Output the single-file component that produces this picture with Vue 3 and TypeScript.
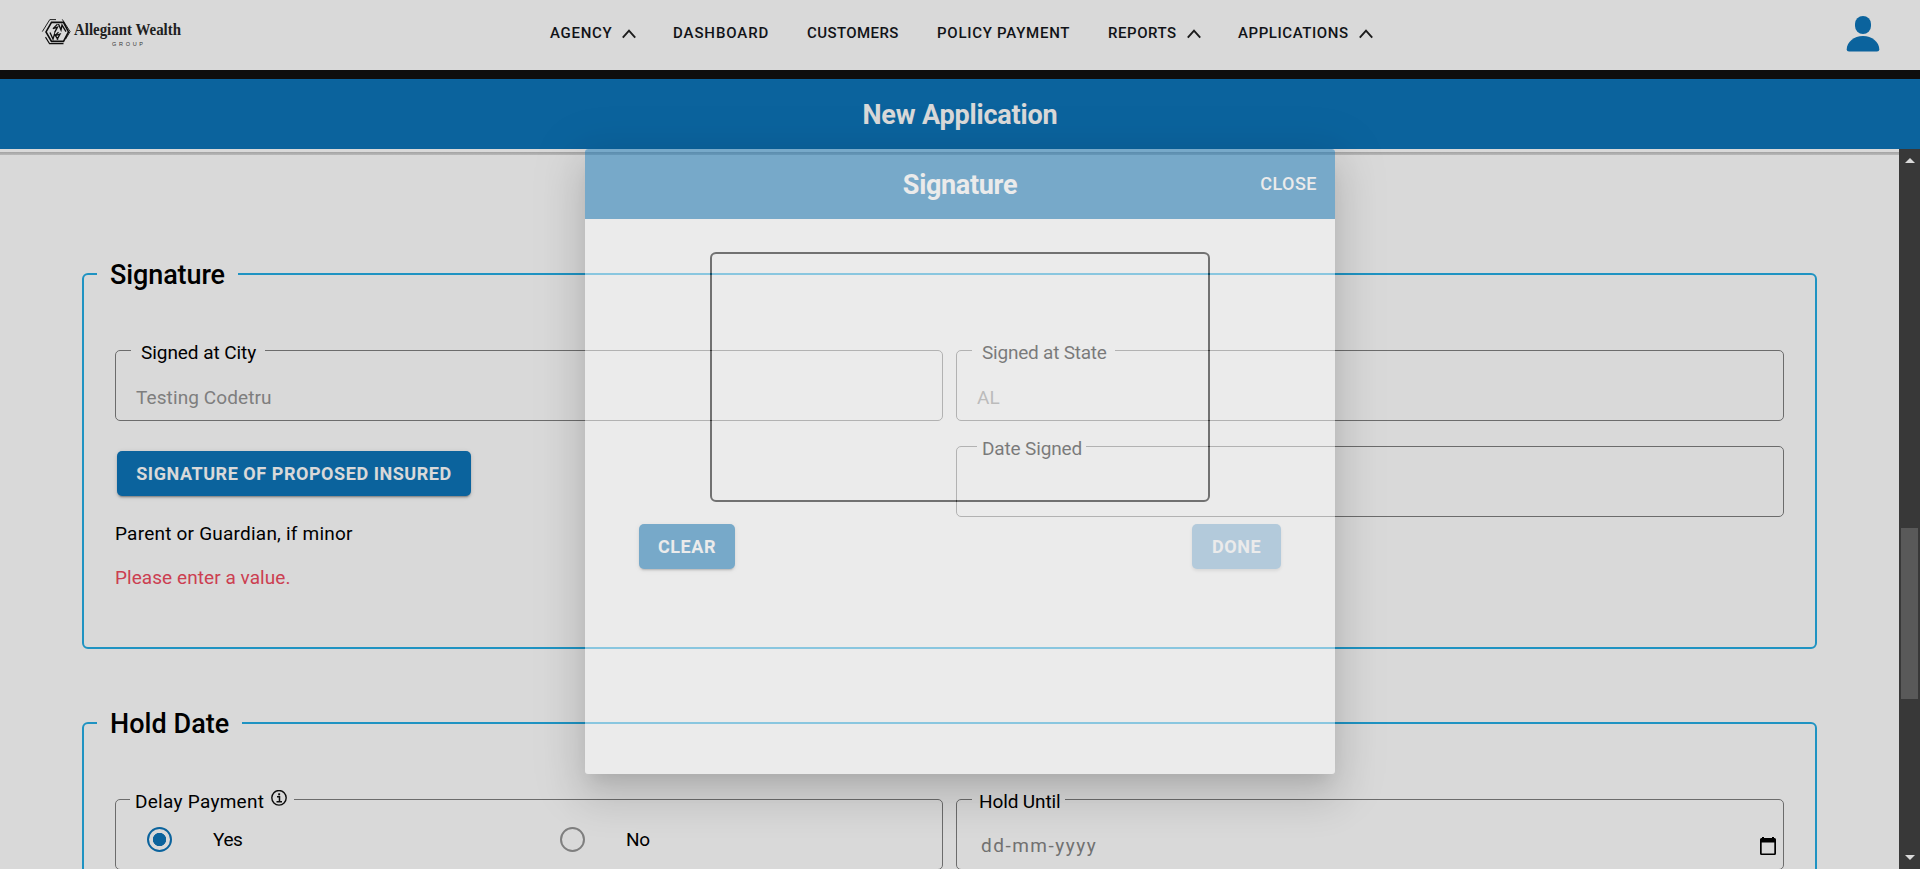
<script setup lang="ts">
import { ref } from 'vue'

interface NavItem {
  label: string
  spacing: number
  menu?: boolean
}

const navItems: NavItem[] = [
  { label: 'AGENCY', spacing: 0.7, menu: true },
  { label: 'DASHBOARD', spacing: 0.9 },
  { label: 'CUSTOMERS', spacing: 0.42 },
  { label: 'POLICY PAYMENT', spacing: 0.74 },
  { label: 'REPORTS', spacing: 0.55, menu: true },
  { label: 'APPLICATIONS', spacing: 0.58, menu: true },
]

const city = ref('Testing Codetru')
const state = ref('AL')
const delay = ref('Yes')
const delayOptions = ['Yes', 'No']
</script>

<template>
  <div class="page">
    <header class="topbar">
      <svg class="logo" width="146" height="38" viewBox="0 0 146 38">
        <g fill="none" stroke="#111" stroke-linejoin="miter" transform="translate(-.5 4.600)">
          <path d="M10 7.800H22L27 17.300L22 26.800H10L4.500 17.300Z" stroke-width="1.600" />
          <path d="M.8 17L8.300 5H14.500" stroke-width=".9" />
          <path d="M20.500 4.800L28.300 17L23.800 24.500" stroke-width=".9" transform="translate(.3 0)" />
          <path d="M22 29H8L4 22.500" stroke-width="1.100" />
          <path d="M16 9.500L11.500 14L16 12.500L13 18M17 9.500L19.500 15.500L20.500 10.500L24.500 17M8.500 18L11.500 24.500L13 19.500L16.500 25M17 17.500L13.500 21L18.500 19.500L15.500 25" stroke-width="1.300" />
        </g>
        <text x="32" y="25" class="brand" textLength="107" lengthAdjust="spacingAndGlyphs">Allegiant Wealth</text>
        <text x="70" y="35.500" class="brand-sub" textLength="31">GROUP</text>
      </svg>
      <nav class="nav">
        <a v-for="item in navItems" :key="item.label" class="nav-item">
          <span :style="{ letterSpacing: item.spacing + 'px' }">{{ item.label }}</span>
          <svg v-if="item.menu" class="chevron" width="14" height="10" viewBox="0 0 14 10">
            <path d="M.8 8.600L7 1.700L13.200 8.600" fill="none" stroke="#222" stroke-width="1.900" />
          </svg>
        </a>
      </nav>
      <svg class="user" width="34" height="38" viewBox="0 0 34 38">
        <rect x="9" y="1" width="16" height="18" rx="8" fill="#0d75b9" />
        <path d="M.7 34.500C.7 27 8 21 17 21S33.300 27 33.300 34.500Q33.300 36.500 31 36.500H3Q.7 36.500.7 34.500Z" fill="#0d75b9" />
      </svg>
    </header>
    <div class="strip"></div>
    <div class="titlebar"><h1>New Application</h1></div>

    <div class="body">
      <main class="content">
        <div class="edge"></div>

        <fieldset class="section signature">
          <legend class="section-title">Signature</legend>
          <div class="columns">
            <div class="column">
              <fieldset class="field">
                <legend class="w-city"><span>Signed at City</span></legend>
                <div class="value">{{ city }}</div>
              </fieldset>
              <button class="btn sign">SIGNATURE OF PROPOSED INSURED</button>
              <p class="guardian">Parent or Guardian, if minor</p>
              <p class="error">Please enter a value.</p>
            </div>
            <div class="column">
              <fieldset class="field">
                <legend class="w-state"><span>Signed at State</span></legend>
                <div class="value">{{ state }}</div>
              </fieldset>
              <fieldset class="field">
                <legend class="w-date"><span>Date Signed</span></legend>
              </fieldset>
            </div>
          </div>
        </fieldset>

        <fieldset class="section hold">
          <legend class="section-title wide">Hold Date</legend>
          <div class="columns">
            <div class="column">
              <fieldset class="field">
                <legend class="w-delay">
                  <span>Delay Payment</span>
                  <svg class="info" width="16" height="20" viewBox="0 0 16 20">
                    <ellipse cx="8" cy="7.800" rx="7.200" ry="7.300" fill="none" stroke="#111" stroke-width="1.400" />
                    <path d="M6 6.800H8.500V11.500M5.500 11.700H11" fill="none" stroke="#111" stroke-width="1.500" />
                    <rect x="7.200" y="3.300" width="1.900" height="2" fill="#111" />
                  </svg>
                </legend>
                <div class="radios">
                  <label v-for="option in delayOptions" :key="option" class="radio">
                    <i :class="['dot', { on: option === delay }]"></i>
                    <span>{{ option }}</span>
                  </label>
                </div>
              </fieldset>
            </div>
            <div class="column">
              <fieldset class="field">
                <legend class="w-until"><span>Hold Until</span></legend>
                <div class="date">
                  <span>dd-mm-yyyy</span>
                  <svg width="16" height="18" viewBox="0 0 16 18">
                    <path d="M2 0H4V1H12V0H14V1H14.500Q16 1 16 2.500V16.500Q16 18 14.500 18H1.500Q0 18 0 16.500V2.500Q0 1 1.500 1H2ZM1.700 5.500V16.500H14.300V5.500Z" fill="#000" fill-rule="evenodd" />
                  </svg>
                </div>
              </fieldset>
            </div>
          </div>
        </fieldset>
      </main>
      <div class="scrollbar">
        <i class="arrow up"></i>
        <i class="thumb"></i>
        <i class="arrow down"></i>
      </div>
    </div>

    <div class="backdrop">
      <section class="modal">
        <header class="modal-head">
          <h2>Signature</h2>
          <button class="close">CLOSE</button>
        </header>
        <div class="pad"></div>
        <div class="actions">
          <button class="btn">CLEAR</button>
          <button class="btn muted">DONE</button>
        </div>
      </section>
    </div>
  </div>
</template>

<style>
body {
  margin: 0;
  overflow: hidden;
}
</style>

<style scoped>
.page {
  position: relative;
  display: flex;
  flex-direction: column;
  height: 869px;
  overflow: hidden;
  background: #fff;
  color: #000;
  font-family: Roboto, "Liberation Sans", sans-serif;
  font-size: 19px;
}
h1, h2, p { margin: 0; }
button { border: 0; padding: 0; font-family: inherit; }
fieldset { min-width: 0; margin: 0; box-sizing: border-box; }
.topbar {
  flex: none;
  display: flex;
  height: 70px;
}
.logo { flex: none; margin: 10px 0 0 42px; overflow: visible; }
.brand { font: 700 17.500px "Liberation Serif", serif; fill: #262626; }
.brand-sub { font: 5.500px "Liberation Sans", sans-serif; fill: #444; }
.nav {
  display: grid;
  grid-template-columns: 123px 134px 130px 171px 130px 140px;
  margin-left: 362px;
  height: 66px;
  align-items: center;
}
.nav-item {
  display: flex;
  align-items: center;
  gap: 10px;
  font-size: 15px;
  font-weight: 500;
  color: #15171c;
  white-space: nowrap;
}
.chevron { margin-top: 1px; }
.user { margin: 15px 40px 0 auto; }
.strip { flex: none; height: 9px; background: #111; }
.titlebar {
  flex: none;
  display: flex;
  align-items: center;
  justify-content: center;
  height: 70px;
  background: #0d75b9;
}
.titlebar h1 {
  padding-top: 1px;
  font-size: 27px;
  line-height: 32px;
  letter-spacing: -0.18px;
  color: #fff;
}
.body { flex: 1; display: flex; min-height: 0; }
.content { flex: 1; overflow: hidden; }
.edge {
  height: 3px;
  margin: 3px 0 103px;
  background: linear-gradient(#c0c0c0, #d9d9d9);
}
.section {
  width: 1735px;
  margin-left: 82px;
  padding: 0 31px 0 13px;
  border: 2px solid #25ade4;
  border-radius: 6px;
}
.signature { height: 391px; }
.hold { height: 240px; margin-top: 58px; }
.section-title {
  box-sizing: border-box;
  width: 141px;
  height: 32px;
  padding: 1px 0 0 13px;
  font-size: 27px;
  font-weight: 500;
  line-height: 32px;
  letter-spacing: -0.100px;
  white-space: nowrap;
}
.section-title.wide { width: 145px; letter-spacing: 0.050px; }
.columns {
  display: grid;
  grid-template-columns: 828px 828px;
  gap: 13px;
  margin: 48px 0 0 18px;
}
.column { display: flex; flex-direction: column; align-items: flex-start; }
.field {
  width: 828px;
  height: 83px;
  padding: 0;
  border: 1px solid #7f7f7f;
  border-radius: 5px;
}
.field + .field { margin-top: 13px; }
.field legend {
  box-sizing: border-box;
  height: 25px;
  padding: 4px 0 0;
  line-height: 21px;
  white-space: nowrap;
}
.field .w-city { width: 134px; margin-left: 15px; padding-left: 10px; letter-spacing: -0.060px; }
.field .w-state { width: 143px; margin-left: 15px; padding-left: 10px; letter-spacing: -0.220px; }
.field .w-date { width: 109px; margin-left: 20px; padding-left: 5px; letter-spacing: -0.150px; }
.field .w-until { width: 93px; margin-left: 15px; padding-left: 7px; letter-spacing: -0.120px; }
.field .w-delay {
  display: flex;
  gap: 7px;
  width: 164px;
  margin-left: 14px;
  padding: 4px 0 0 5px;
  letter-spacing: 0.280px;
}
.info { flex: none; margin-top: -1px; }
.value {
  margin: 23px 0 0 20px;
  line-height: 24px;
  letter-spacing: 0.100px;
  color: #959595;
}
.btn {
  height: 45px;
  padding: 0 19px;
  border-radius: 5px;
  background: #0d75b9;
  box-shadow: 0 3px 1px -2px rgba(0, 0, 0, .2), 0 2px 2px rgba(0, 0, 0, .14), 0 1px 5px rgba(0, 0, 0, .12);
  color: #fff;
  font-size: 18px;
  font-weight: 700;
  letter-spacing: 0.550px;
  white-space: nowrap;
}
.sign { width: 354px; margin: 30px 0 0 2px; padding: 0; }
.guardian { margin-top: 26px; line-height: 24px; letter-spacing: 0.220px; }
.error { margin-top: 20px; line-height: 24px; letter-spacing: 0.060px; color: #f04a60; }
.radios {
  display: grid;
  grid-template-columns: 413px 413px;
  height: 55px;
  align-items: center;
}
.radio { display: flex; align-items: center; gap: 41px; padding-left: 31px; }
.dot {
  box-sizing: border-box;
  width: 25px;
  height: 25px;
  border: 2px solid #969696;
  border-radius: 50%;
}
.dot.on {
  border-color: #0d75b9;
  background: radial-gradient(circle, #0d75b9 6.300px, transparent 7px);
}
.radio span { letter-spacing: -0.400px; }
.date {
  display: flex;
  align-items: center;
  justify-content: space-between;
  margin: 22px 7px 0 24px;
  line-height: 24px;
  letter-spacing: 1.500px;
  color: #858585;
}
.scrollbar {
  flex: none;
  display: flex;
  flex-direction: column;
  align-items: center;
  width: 21px;
  background: #424242;
}
.arrow { border: 5px solid transparent; border-top-width: 0; border-bottom: 5px solid #fff; }
.up { margin-top: 9px; }
.down { margin-top: 156px; border-width: 5px 5px 0; border-top-color: #fff; border-bottom-color: transparent; }
.thumb { width: 17px; height: 171px; margin-top: 365px; background: #696969; }
.backdrop {
  position: absolute;
  inset: 0;
  display: flex;
  justify-content: center;
  align-items: flex-start;
  background: rgba(0, 0, 0, .15);
}
.modal {
  width: 750px;
  height: 625px;
  margin-top: 149px;
  overflow: hidden;
  border-radius: 3px;
  background: #fff;
  opacity: .475;
  box-shadow: 0 11px 15px -7px rgba(0, 0, 0, .22), 0 24px 38px 3px rgba(0, 0, 0, .2), 0 9px 46px 8px rgba(0, 0, 0, .17);
}
.modal-head {
  display: grid;
  grid-template-columns: 1fr auto 1fr;
  align-items: center;
  height: 70px;
  background: #0d75b9;
  color: #fff;
}
.modal-head h2 {
  grid-column: 2;
  padding-top: 2px;
  font-size: 27px;
  line-height: 32px;
  letter-spacing: -0.330px;
}
.close {
  justify-self: end;
  margin: 0 18px 2px 0;
  background: none;
  color: #fff;
  font-size: 18px;
  font-weight: 500;
  letter-spacing: 0.500px;
}
.pad {
  box-sizing: border-box;
  width: 500px;
  height: 250px;
  margin: 33px auto 22px;
  border: 2px solid #000;
  border-radius: 6px;
}
.actions { display: flex; justify-content: space-between; padding: 0 54px; }
.actions .btn { min-width: 89px; }
.muted { background: #8abbdf; box-shadow: 0 2px 3px rgba(0, 0, 0, .15); }
</style>
